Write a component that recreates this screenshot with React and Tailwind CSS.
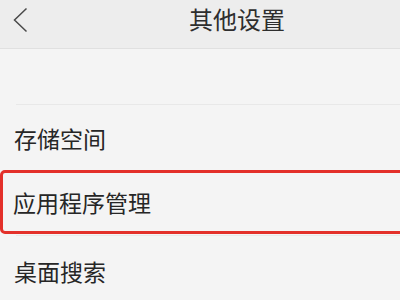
export default function App() {
  const font = { fontFamily: '"Noto Sans CJK SC", "Noto Sans", sans-serif' };
  return (
    <div className="w-[400px] h-[300px] overflow-hidden bg-[#f4f4f4] text-[#262626]" style={font}>
      {/* Header */}
      <div className="h-[49px] flex items-start bg-[#ededed] border-b border-[#e0e0e0]">
        <svg className="ml-[12px] mt-[7px]" width="17" height="26" viewBox="0 0 17 26" fill="none">
          <path d="M14.5 1.5 L2.5 13 L14.5 24.5" stroke="#4a4a4a" strokeWidth="1.5" />
        </svg>
        <div className="ml-[160px] mt-[3px] text-[24px] leading-[32px] text-[#2e2e2e]">其他设置</div>
      </div>

      {/* Spacer + divider */}
      <div className="h-[55px]" />
      <div className="ml-[16px] border-t border-[#e8e8e8]" />

      <div className="h-[65px] flex items-center pl-[14px] text-[23px] pt-[1px]">存储空间</div>

      <div className="h-[64px] -mr-[6px] border-[3px] border-[#e3302a] rounded-[5px] flex items-center pl-[10px] text-[23px]">
        应用程序管理
      </div>

      <div className="ml-[16px] mt-[1px] border-t border-[#e8e8e8]" />
      <div className="h-[70px] flex items-center pl-[14px] text-[23px]">桌面搜索</div>
    </div>
  );
}
